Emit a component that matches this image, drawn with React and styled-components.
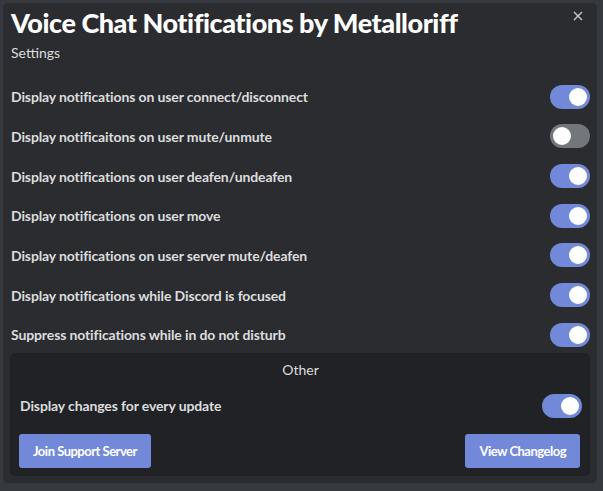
import React, { useState } from "react";
import styled, { createGlobalStyle } from "styled-components";

const Global = createGlobalStyle`
  html, body { margin: 0; padding: 0; background: #36393f; }
  body { font-family: Lato, "Noto Sans", sans-serif; }
`;

const Modal = styled.div`
  box-sizing: border-box;
  margin: 3px 0 0 3px;
  width: 594px;
  height: 480px;
  background: #2a2c30;
  border-radius: 5px;
  padding: 0 7px 0 7px;
  position: relative;
  display: flex;
  flex-direction: column;
`;

const Title = styled.h1`
  margin: 0;
  padding: 4px 0 0 1px;
  height: 34px;
  box-sizing: border-box;
  font-family: Lato, sans-serif;
  font-weight: 900;
  font-size: 27px;
  line-height: 32px;
  color: #ffffff;
  letter-spacing: -0.45px;
`;

const Subtitle = styled.div`
  padding: 6px 0 0 1px;
  font-size: 14px;
  line-height: 20px;
  color: #dcddde;
  height: 40px;
  box-sizing: border-box;
`;

const Close = styled.button`
  position: absolute;
  top: 5px;
  right: 11px;
  width: 16px;
  height: 16px;
  padding: 0;
  border: none;
  background: none;
  color: #c9cacc;
  display: flex;
  align-items: center;
  justify-content: center;
`;

const List = styled.div`
  display: flex;
  flex-direction: column;
`;

const Row = styled.div`
  height: 39.67px;
  display: flex;
  align-items: center;
  justify-content: space-between;
  padding-left: 1px;
`;

const Label = styled.span`
  font-size: 14px;
  font-weight: 700;
  color: #dcddde;
  letter-spacing: -0.12px;
`;

const Track = styled.div`
  width: 40px;
  height: 24px;
  border-radius: 12px;
  background: ${(p) => (p.$on ? "#7289da" : "#72767d")};
  position: relative;
  flex: none;
  cursor: pointer;
`;

const Knob = styled.div`
  position: absolute;
  top: 3px;
  left: ${(p) => (p.$on ? "19px" : "3px")};
  width: 18px;
  height: 18px;
  border-radius: 50%;
  background: #ffffff;
`;

const Panel = styled.div`
  margin-top: -2px;
  background: #202225;
  border-radius: 5px;
  padding: 0 8px 8px 9px;
  display: flex;
  flex-direction: column;
`;

const PanelTitle = styled.div`
  text-align: center;
  font-size: 14px;
  color: #dcddde;
  line-height: 20px;
  padding-top: 7px;
  height: 33px;
  box-sizing: border-box;
`;

const PanelRow = styled.div`
  height: 40px;
  display: flex;
  align-items: center;
  justify-content: space-between;
  padding-left: 1px;
`;

const Buttons = styled.div`
  display: flex;
  justify-content: space-between;
  margin-top: 8px;
  padding-right: 2px;
`;

const Button = styled.button`
  height: 34px;
  padding: 0 14px;
  border: none;
  border-radius: 3px;
  background: #7289da;
  color: #ffffff;
  font-family: Lato, sans-serif;
  font-size: 13px;
  font-weight: 700;
  letter-spacing: -0.5px;
`;

function Toggle({ initial }) {
  const [on, setOn] = useState(initial);
  return (
    <Track $on={on} onClick={() => setOn(!on)}>
      <Knob $on={on} />
    </Track>
  );
}

const settings = [
  ["Display notifications on user connect/disconnect", true],
  ["Display notificaitons on user mute/unmute", false],
  ["Display notifications on user deafen/undeafen", true],
  ["Display notifications on user move", true],
  ["Display notifications on user server mute/deafen", true],
  ["Display notifications while Discord is focused", true],
  ["Suppress notifications while in do not disturb", true],
];

export default function App() {
  return (
    <>
      <Global />
      <Modal>
        <Title>Voice Chat Notifications by Metalloriff</Title>
        <Close aria-label="Close">
          <svg width="10" height="10" viewBox="0 0 10 10">
            <path d="M1 1L9 9M9 1L1 9" stroke="currentColor" strokeWidth="1.4" />
          </svg>
        </Close>
        <Subtitle>Settings</Subtitle>
        <List>
          {settings.map(([t, v]) => (
            <Row key={t}>
              <Label>{t}</Label>
              <Toggle initial={v} />
            </Row>
          ))}
        </List>
        <Panel>
          <PanelTitle>Other</PanelTitle>
          <PanelRow>
            <Label>Display changes for every update</Label>
            <Toggle initial={true} />
          </PanelRow>
          <Buttons>
            <Button>Join Support Server</Button>
            <Button>View Changelog</Button>
          </Buttons>
        </Panel>
      </Modal>
    </>
  );
}
